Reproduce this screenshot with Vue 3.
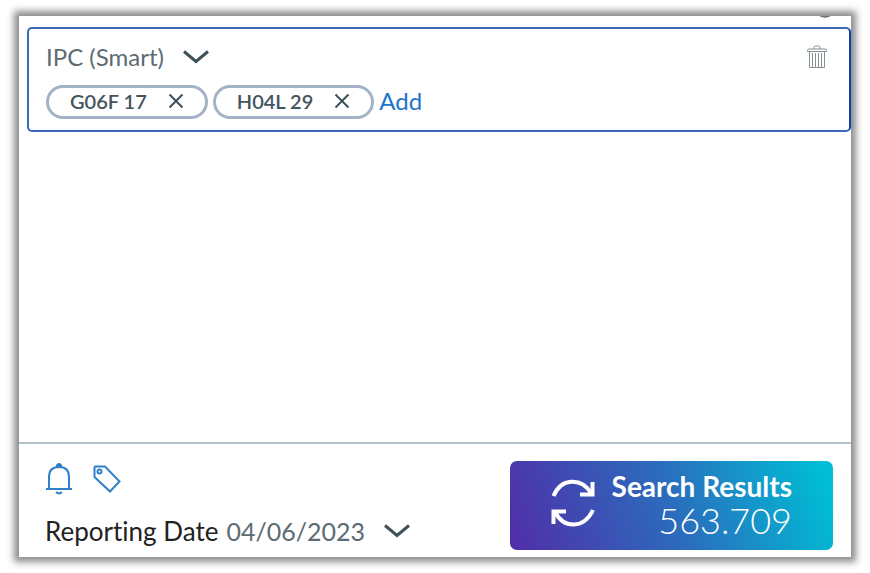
<script setup>
import { ref } from 'vue'

const field = ref('IPC (Smart)')
const codes = ref(['G06F 17', 'H04L 29'])
const reportingDate = ref('04/06/2023')
const resultCount = ref('563.709')

function removeCode(code) {
  codes.value = codes.value.filter((item) => item !== code)
}
</script>

<template>
  <main class="panel">
    <div class="previous" aria-hidden="true">
      <svg width="16" height="3" viewBox="0 0 16 3">
        <path d="M2 0h12q-3 1.800-6 1.800T2 0z" fill="#6b777d" />
      </svg>
    </div>

    <section class="filter">
      <div class="filter-head">
        <div class="picker">
          <select v-model="field" class="picker-select" aria-label="Search field">
            <option>IPC (Smart)</option>
          </select>
          <svg class="chevron" width="28" height="16" viewBox="0 0 28 16" aria-hidden="true">
            <path d="M2 2.500 14 12.500 26 2.500" />
          </svg>
        </div>
        <button class="icon-button trash" type="button" aria-label="Delete filter">
          <svg width="22" height="24" viewBox="0 0 22 24" aria-hidden="true">
            <path d="M8 4V2.8Q8 1 9.500 1h3Q14 1 14 2.800V4M1.500 6.500V5.500Q1.500 4 3 4h16q1.500 0 1.500 1.500v1zM3.500 7v15.500h15V7M6.500 8v14M9.500 8v14M12.500 8v14M15.500 8v14" />
          </svg>
        </button>
      </div>
      <div class="codes">
        <span v-for="code in codes" :key="code" class="chip">
          {{ code }}
          <button class="icon-button" type="button" :aria-label="`Remove ${code}`" @click="removeCode(code)">
            <svg class="cross" width="16" height="16" viewBox="0 0 16 16" aria-hidden="true">
              <path d="M1.500 1.500l13 13M14.500 1.500l-13 13" />
            </svg>
          </button>
        </span>
        <a class="add" href="#add">Add</a>
      </div>
    </section>

    <footer class="footer">
      <div class="report">
        <div class="tools">
          <button class="icon-button tool" type="button" aria-label="Alerts">
            <svg width="28" height="32" viewBox="0 0 28 32" aria-hidden="true">
              <path d="M1 26h26M4 26V14Q4 4 14 4t10 10v12M11 29q3 3 6 0" />
              <path d="M11.500 4Q12 1 14 1t2.500 3z" fill="#2f7fc9" />
            </svg>
          </button>
          <button class="icon-button tool" type="button" aria-label="Tags">
            <svg width="28" height="28" viewBox="0 0 28 28" aria-hidden="true">
              <path d="M1.500 2.500Q1.500 1.500 2.500 1.500H12L26.500 16.500 17 26.500 1.500 12z" />
              <circle cx="6.500" cy="6.500" r="2" />
            </svg>
          </button>
        </div>
        <div class="date-row">
          <label for="reporting-date">Reporting Date</label>
          <div class="picker">
            <select id="reporting-date" v-model="reportingDate" class="picker-select date">
              <option>04/06/2023</option>
            </select>
            <svg class="chevron" width="28" height="16" viewBox="0 0 28 16" aria-hidden="true">
              <path d="M2 2.500 14 12.500 26 2.500" />
            </svg>
          </div>
        </div>
      </div>

      <button class="search" type="button">
        <svg width="44" height="50" viewBox="0 0 44 50" aria-hidden="true">
          <path d="M2.500 18C10 0 30-1 40 15M42 32C33 51 13 51 4 34" />
          <path d="M41.500 4v12.500H29M2.500 46V33.500H15" />
        </svg>
        <span class="search-text">
          <strong>Search Results</strong>
          <span class="count">{{ resultCount }}</span>
        </span>
      </button>
    </footer>
  </main>
</template>

<style>
body {
  background: #fff;
}
</style>

<style scoped>
.panel {
  display: flex;
  flex-direction: column;
  box-sizing: border-box;
  min-height: calc(100vh - 32px);
  margin: 16px 19px;
  background: #fff;
  box-shadow: 0 0 7px 5px #8c8c8c;
  font-family: Lato, sans-serif;
  font-variant-ligatures: none;
  color: #44545c;
}

.previous {
  display: flex;
  justify-content: flex-end;
  height: 11px;
  padding-right: 18px;
}

.filter {
  display: flex;
  flex-direction: column;
  gap: 12px;
  margin-left: 8px;
  padding: 12px 18px 11px 17px;
  border: 2px solid #3d6ab5;
  border-right-color: #0b41a8;
  border-radius: 5px;
}

.filter-head {
  display: flex;
  align-items: center;
  justify-content: space-between;
  height: 32px;
}

.picker {
  display: flex;
  align-items: center;
  gap: 18px;
}

.picker-select {
  appearance: none;
  field-sizing: content;
  padding: 0;
  border: 0;
  background: none;
  font: 24px/32px Lato, sans-serif;
  color: #5d6b73;
}

.picker-select.date {
  font-size: 25px;
}

svg {
  display: block;
  fill: none;
}

.chevron {
  stroke: #40515a;
  stroke-width: 3;
}

.icon-button {
  padding: 0;
  border: 0;
  background: none;
  cursor: pointer;
}

.trash {
  margin-right: 3px;
  stroke: #858f93;
}

.codes {
  display: flex;
  align-items: center;
  gap: 5px;
  line-height: 24px;
}

.chip {
  display: flex;
  align-items: center;
  gap: 21px;
  box-sizing: border-box;
  height: 34px;
  padding: 0 21px 2px;
  border: 3px solid #a3b3c5;
  border-radius: 17px;
  font-size: 20px;
  font-weight: 600;
}

.cross {
  stroke: #40515a;
  stroke-width: 2;
}

.add {
  padding-bottom: 2px;
  font-size: 24px;
  color: #1b75cc;
  text-decoration: none;
}

.footer {
  display: flex;
  justify-content: space-between;
  margin-top: auto;
  padding: 17px 18px 7px 26px;
  border-top: 2px solid #b4c2cc;
}

.report {
  display: flex;
  flex-direction: column;
  gap: 20px;
  padding-top: 2px;
}

.tools {
  display: flex;
  align-items: center;
  gap: 20px;
}

.tool {
  stroke: #2f7fc9;
  stroke-width: 2;
}

.date-row {
  display: flex;
  align-items: center;
  gap: 8px;
  font-size: 26px;
  line-height: 32px;
  color: #222;
}

.search {
  display: flex;
  align-items: center;
  gap: 17px;
  box-sizing: border-box;
  height: 89px;
  padding: 0 41px 5px;
  border: 0;
  border-radius: 7px;
  background: linear-gradient(70deg, #512da8, #2b6cbd 50%, #00bcd4 95%);
  color: #fff;
  font-family: Lato, sans-serif;
  cursor: pointer;
}

.search svg {
  stroke: #fff;
  stroke-width: 4;
}

.search-text {
  display: flex;
  flex-direction: column;
  align-items: flex-end;
  font-size: 28px;
  line-height: 34px;
}

.count {
  font-size: 36px;
  font-weight: 300;
}
</style>
